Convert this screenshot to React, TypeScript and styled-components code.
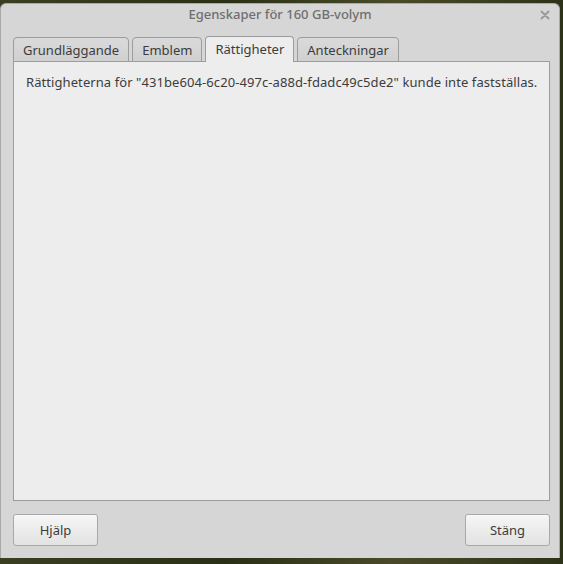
import styled, { createGlobalStyle } from 'styled-components';

const GlobalStyle = createGlobalStyle`
  html, body {
    margin: 0;
    padding: 0;
    width: 563px;
    height: 564px;
    overflow: hidden;
    background: #2b3217;
    font-family: "Noto Sans", "DejaVu Sans", sans-serif;
  }
`;

const Desktop = styled.div`
  width: 563px;
  height: 564px;
  padding-top: 3px;
  box-sizing: border-box;
  background: linear-gradient(90deg, #3a3f22 0%, #2a3015 40%, #4a4a2a 70%, #2d3318 100%);
`;

const Window = styled.div`
  width: 560px;
  height: 555px;
  box-sizing: border-box;
  background: #d6d6d6;
  border: 1px solid #a9a9a9;
  border-bottom: none;
  border-radius: 6px 6px 0 0;
  display: flex;
  flex-direction: column;
`;

const TitleBar = styled.div`
  height: 25px;
  box-sizing: border-box;
  padding-bottom: 5px;
  display: flex;
  align-items: center;
  justify-content: center;
  position: relative;
  color: #6e6e6e;
  font-size: 13px;
  font-weight: 500;
`;

const CloseButton = styled.span`
  position: absolute;
  right: 7px;
  top: 4px;
  width: 14px;
  height: 14px;
  display: flex;
  align-items: center;
  justify-content: center;
`;

const Body = styled.div`
  flex: 1;
  display: flex;
  flex-direction: column;
  padding: 7px 9px 12px 12px;
`;

const TabRow = styled.div`
  display: flex;
  align-items: flex-end;
  gap: 3px;
  height: 26px;
  position: relative;
  z-index: 1;
  margin-bottom: -1px;
`;

const Tab = styled.div<{ $active?: boolean }>`
  height: ${(p) => (p.$active ? '26px' : '25px')};
  box-sizing: border-box;
  padding: 0 9px;
  display: flex;
  align-items: center;
  font-size: 13px;
  color: #3c3c3c;
  border: 1px solid #9c9c9c;
  border-bottom: ${(p) => (p.$active ? 'none' : '1px solid #9c9c9c')};
  border-radius: 4px 4px 0 0;
  background: ${(p) =>
    p.$active ? '#ededed' : 'linear-gradient(#dadada, #d0d0d0)'};
  padding-bottom: ${(p) => (p.$active ? '1px' : '0')};
`;

const Panel = styled.div`
  flex: 1;
  background: #ededed;
  border: 1px solid #9c9c9c;
  padding: 11px 0 11px 12px;
  font-size: 13px;
  letter-spacing: 0.08px;
  white-space: nowrap;
  color: #3c3c3c;
`;

const ButtonRow = styled.div`
  display: flex;
  justify-content: space-between;
  margin-top: 13px;
`;

const Button = styled.button`
  width: 85px;
  height: 32px;
  border: 1px solid #a8a8a8;
  border-radius: 3px;
  background: linear-gradient(#f6f6f6, #e2e2e2);
  box-shadow: 0 1px 0 rgba(255, 255, 255, 0.6) inset;
  font-family: inherit;
  font-size: 13px;
  color: #3c3c3c;
  padding: 0;
`;

const tabs = ['Grundläggande', 'Emblem', 'Rättigheter', 'Anteckningar'];

export default function App() {
  return (
    <Desktop>
      <GlobalStyle />
      <Window>
        <TitleBar>
          Egenskaper för 160 GB-volym
          <CloseButton>
            <svg width="10" height="10" viewBox="0 0 10 10">
              <path d="M1.5 1.5 L8.5 8.5 M8.5 1.5 L1.5 8.5" stroke="#9a9a9a" strokeWidth="2" strokeLinecap="round" />
            </svg>
          </CloseButton>
        </TitleBar>
        <Body>
          <TabRow>
            {tabs.map((t) => (
              <Tab key={t} $active={t === 'Rättigheter'}>
                {t}
              </Tab>
            ))}
          </TabRow>
          <Panel>
            Rättigheterna för "431be604-6c20-497c-a88d-fdadc49c5de2" kunde inte fastställas.
          </Panel>
          <ButtonRow>
            <Button>Hjälp</Button>
            <Button>Stäng</Button>
          </ButtonRow>
        </Body>
      </Window>
    </Desktop>
  );
}
